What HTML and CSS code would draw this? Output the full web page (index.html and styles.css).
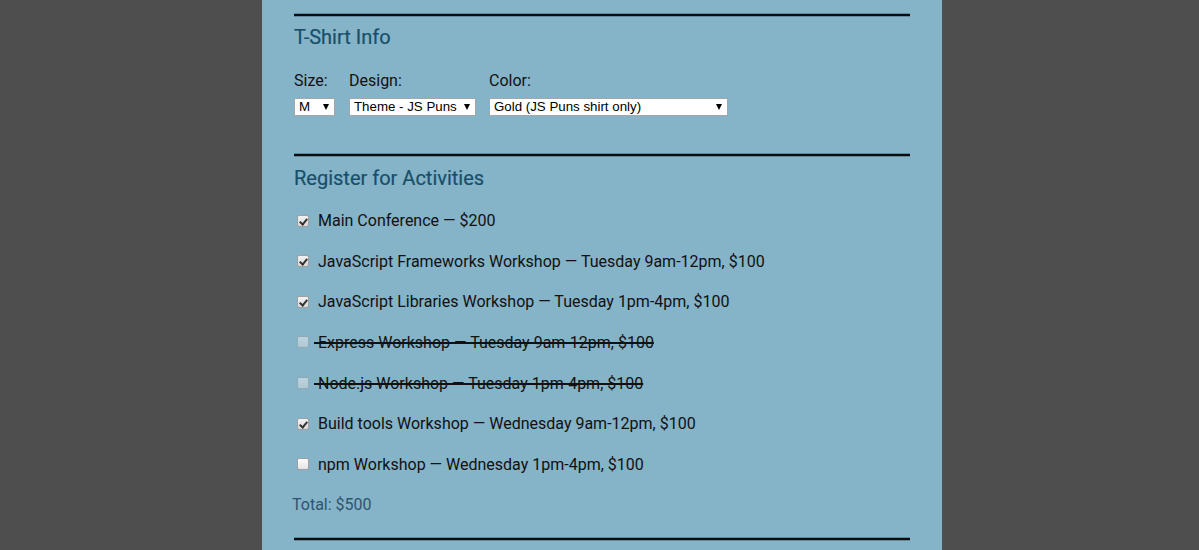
FILE: index.html
```html
<!DOCTYPE html>
<html lang="en">
<head>
<meta charset="utf-8">
<title>Registration</title>
<link rel="stylesheet" href="styles.css">
</head>
<body>
<div class="page">
  <form class="panel">
    <div class="rule"></div>
    <h2 class="legend">T-Shirt Info</h2>
    <div class="shirt-row">
      <div class="field field-size">
        <label class="field-label">Size:</label>
        <span class="select select-size"><span class="select-text">M</span></span>
      </div>
      <div class="field field-design">
        <label class="field-label">Design:</label>
        <span class="select select-design"><span class="select-text">Theme - JS Puns</span></span>
      </div>
      <div class="field field-color">
        <label class="field-label">Color:</label>
        <span class="select select-color"><span class="select-text">Gold (JS Puns shirt only)</span></span>
      </div>
    </div>

    <div class="rule rule-2"></div>
    <h2 class="legend legend-2">Register for Activities</h2>
    <ul class="activities">
      <li class="activity"><span class="box checked"></span><span class="activity-text">Main Conference — $200</span></li>
      <li class="activity"><span class="box checked"></span><span class="activity-text">JavaScript Frameworks Workshop — Tuesday 9am-12pm, $100</span></li>
      <li class="activity"><span class="box checked"></span><span class="activity-text">JavaScript Libraries Workshop — Tuesday 1pm-4pm, $100</span></li>
      <li class="activity disabled"><span class="box"></span><span class="activity-text">&nbsp;Express Workshop — Tuesday 9am-12pm, $100</span></li>
      <li class="activity disabled"><span class="box"></span><span class="activity-text">&nbsp;Node.js Workshop — Tuesday 1pm-4pm, $100</span></li>
      <li class="activity"><span class="box checked"></span><span class="activity-text">Build tools Workshop — Wednesday 9am-12pm, $100</span></li>
      <li class="activity"><span class="box"></span><span class="activity-text">npm Workshop — Wednesday 1pm-4pm, $100</span></li>
    </ul>
    <p class="total">Total: $500</p>
    <div class="rule rule-3"></div>
  </form>
</div>
</body>
</html>
```

FILE: styles.css
```css
html, body {
  margin: 0;
  padding: 0;
  height: 100%;
}

body {
  background: #4e4e4e;
  font-family: Roboto, "Liberation Sans", Arial, sans-serif;
  overflow: hidden;
}

.page {
  display: flex;
  justify-content: center;
  padding-left: 5px;
  min-height: 100%;
}

.panel {
  width: 680px;
  box-sizing: border-box;
  padding: 0 32px;
  background: #85b3c8;
  min-height: 550px;
}

.rule {
  height: 2px;
  background: #0c0c0c;
  box-shadow: 0 -1px 0 rgba(40, 60, 70, 0.35), 0 1px 0 rgba(40, 60, 70, 0.35);
  margin-top: 14px;
}

.rule-2 {
  margin-top: 38px;
}

.legend {
  margin: 10px 0 0;
  font-size: 20px;
  line-height: 23px;
  font-weight: 400;
  color: #184f68;
  -webkit-text-stroke: 0.2px #184f68;
}

.legend-2 {
  margin-top: 11px;
}

.shirt-row {
  display: flex;
  margin-top: 22px;
}

.field {
  display: flex;
  flex-direction: column;
}

.field-size { width: 55px; }
.field-design { width: 140px; }

.field-label {
  font-size: 16px;
  line-height: 19px;
  color: #111;
}

.select {
  position: relative;
  display: block;
  box-sizing: border-box;
  height: 18px;
  margin-top: 8px;
  background: #fff;
  border: 1px solid #a6a6a6;
  font-family: "Liberation Sans", Arial, sans-serif;
  font-size: 13.3px;
  line-height: 16px;
  color: #000;
  padding-left: 4px;
}

.select::after {
  content: "";
  position: absolute;
  right: 5px;
  top: 5px;
  border-left: 3.5px solid transparent;
  border-right: 3.5px solid transparent;
  border-top: 6px solid #000;
}

.select-size { width: 41px; }
.select-design { width: 127px; }
.select-color { width: 239px; }

.activities {
  list-style: none;
  margin: 21px 0 0;
  padding: 0;
  display: flex;
  flex-direction: column;
  gap: 21.67px;
}

.activity {
  display: flex;
  align-items: center;
  height: 19px;
  font-size: 16px;
  line-height: 19px;
  color: #111;
}

.box {
  position: relative;
  flex: none;
  box-sizing: border-box;
  width: 12px;
  height: 12px;
  margin: 0 9px 0 3px;
  border: 1px solid #a0a0a0;
  border-radius: 2px;
  background: linear-gradient(#fdfdfd, #e4e4e4);
}

.box.checked {
  background: linear-gradient(#f2f2f2, #d8d8d8);
}

.box.checked::after {
  content: "";
  position: absolute;
  left: 3px;
  top: 1px;
  width: 3px;
  height: 6px;
  border-right: 2px solid #333;
  border-bottom: 2px solid #333;
  transform: rotate(40deg);
}

.activity.disabled .box {
  opacity: 0.45;
}

.activity.disabled .activity-text {
  text-decoration: line-through;
  text-decoration-thickness: 1.5px;
  margin-left: -4px;
}

.total {
  margin: 21px 0 0 -2px;
  font-size: 16px;
  line-height: 19px;
  color: #2f5470;
}

.rule-3 {
  margin-top: 24px;
}
```
